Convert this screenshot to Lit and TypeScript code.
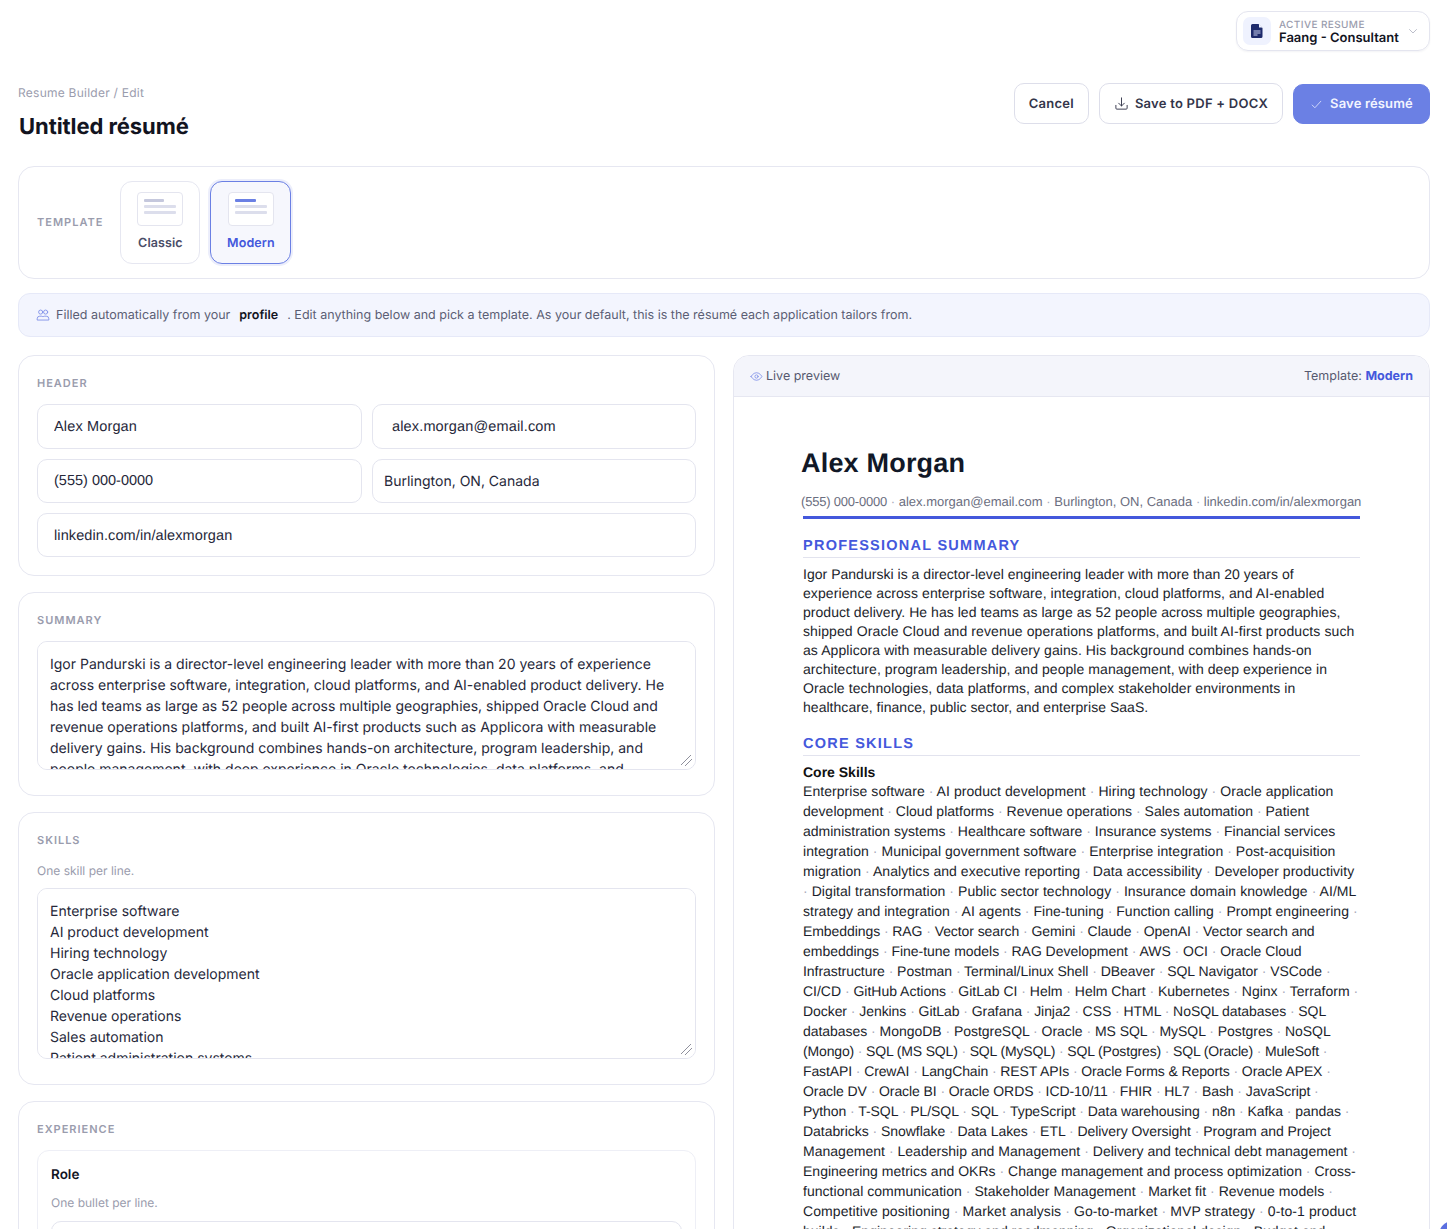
import { LitElement, html, css, svg } from "lit";
import { customElement } from "lit/decorators.js";

const SUMMARY = "Igor Pandurski is a director-level engineering leader with more than 20 years of experience across enterprise software, integration, cloud platforms, and AI-enabled product delivery. He has led teams as large as 52 people across multiple geographies, shipped Oracle Cloud and revenue operations platforms, and built AI-first products such as Applicora with measurable delivery gains. His background combines hands-on architecture, program leadership, and people management, with deep experience in Oracle technologies, data platforms, and complex stakeholder environments in healthcare, finance, public sector, and enterprise SaaS.";

const SKILLS = ["Enterprise software","AI product development","Hiring technology","Oracle application development","Cloud platforms","Revenue operations","Sales automation","Patient administration systems","Healthcare software","Insurance systems","Financial services integration"];

type Line = [string, number];

const SUMMARY_LINES: Line[] = [
  ["Igor Pandurski is a director-level engineering leader with more than 20 years of", 2],
  ["experience across enterprise software, integration, cloud platforms, and AI-enabled", 7],
  ["product delivery. He has led teams as large as 52 people across multiple geographies,", 3],
  ["shipped Oracle Cloud and revenue operations platforms, and built AI-first products such", 9],
  ["as Applicora with measurable delivery gains. His background combines hands-on", 6],
  ["architecture, program leadership, and people management, with deep experience in", 5],
  ["Oracle technologies, data platforms, and complex stakeholder environments in", 6],
  ["healthcare, finance, public sector, and enterprise SaaS.", 2],
];

const SKILL_LINES: Line[] = [
  ["Enterprise software · AI product development · Hiring technology · Oracle application", 5],
  ["development · Cloud platforms · Revenue operations · Sales automation · Patient", 1],
  ["administration systems · Healthcare software · Insurance systems · Financial services", 0],
  ["integration · Municipal government software · Enterprise integration · Post-acquisition", 4],
  ["migration · Analytics and executive reporting · Data accessibility · Developer productivity", 5],
  ["· Digital transformation · Public sector technology · Insurance domain knowledge · AI/ML", 5.5],
  ["strategy and integration · AI agents · Fine-tuning · Function calling · Prompt engineering ·", 2],
  ["Embeddings · RAG · Vector search · Gemini · Claude · OpenAI · Vector search and", -6],
  ["embeddings · Fine-tune models · RAG Development · AWS · OCI · Oracle Cloud", -2],
  ["Infrastructure · Postman · Terminal/Linux Shell · DBeaver · SQL Navigator · VSCode ·", -4],
  ["CI/CD · GitHub Actions · GitLab CI · Helm · Helm Chart · Kubernetes · Nginx · Terraform ·", -1],
  ["Docker · Jenkins · GitLab · Grafana · Jinja2 · CSS · HTML · NoSQL databases · SQL", -5],
  ["databases · MongoDB · PostgreSQL · Oracle · MS SQL · MySQL · Postgres · NoSQL", -3],
  ["(Mongo) · SQL (MS SQL) · SQL (MySQL) · SQL (Postgres) · SQL (Oracle) · MuleSoft ·", -13],
  ["FastAPI · CrewAI · LangChain · REST APIs · Oracle Forms & Reports · Oracle APEX ·", -9],
  ["Oracle DV · Oracle BI · Oracle ORDS · ICD-10/11 · FHIR · HL7 · Bash · JavaScript ·", -7],
  ["Python · T-SQL · PL/SQL · SQL · TypeScript · Data warehousing · n8n · Kafka · pandas ·", -5],
  ["Databricks · Snowflake · Data Lakes · ETL · Delivery Oversight · Program and Project", -4],
  ["Management · Leadership and Management · Delivery and technical debt management ·", 2],
  ["Engineering metrics and OKRs · Change management and process optimization · Cross-", 1],
  ["functional communication · Stakeholder Management · Market fit · Revenue models ·", 3],
  ["Competitive positioning · Market analysis · Go-to-market · MVP strategy · 0-to-1 product", 8],
  ["builds · Engineering strategy and roadmapping · Organizational design · Budget and", 0],
];

const fit = ([t, d]: Line) => `letter-spacing:${(d / t.length).toFixed(3)}px`;

const thumb = (cls: string) => html`<span class="thumb ${cls}"><i></i><i></i><i></i></span>`;

@customElement("app-root")
export class AppRoot extends LitElement {
  static styles = css`
    :host { display: block; height: 1229px; overflow: hidden; position: relative; background: #fff; font-family: Inter, "Liberation Sans", sans-serif; color: #12141f; box-sizing: border-box; padding: 0 17px 0 18px; text-rendering: geometricPrecision; }
    * { box-sizing: border-box; }
    input, textarea, button { text-rendering: geometricPrecision; }
    .top { display: flex; justify-content: flex-end; padding-top: 11px; height: 83px; }
    .active { width: 194px; height: 40px; border: 1px solid #e4e5ef; border-radius: 12px; display: flex; align-items: center; padding: 0 10px 0 6px; box-shadow: 0 1px 2px rgba(20,20,60,.05); }
    .tile { width: 28px; height: 28px; border-radius: 7px; background: #eff2fe; display: flex; align-items: center; justify-content: center; margin-right: 8px; }
    .active-text { flex: 1; display: flex; flex-direction: column; padding-top: 2px; }
    .active-label { font-size: 10px; line-height: 12px; letter-spacing: .4px; color: #9a9cad; font-weight: 500; }
    .active-name { font-size: 13px; line-height: 14px; font-weight: 600; color: #12141f; }
    .head { display: flex; justify-content: space-between; align-items: flex-start; height: 83px; }
    .crumb { font-size: 12px; line-height: 18px; color: #9a9cad; margin-bottom: 8px; padding-top: 1px; letter-spacing: .25px; }
    h1 { margin: 0 0 0 1px; font-size: 22px; line-height: 34px; font-weight: 700; letter-spacing: -.07px; color: #12141f; }
    .actions { display: flex; gap: 10px; }
    .btn { height: 41px; border: 1px solid #dddeea; border-radius: 10px; display: flex; align-items: center; gap: 6px; padding: 0 14px; font-size: 13px; font-weight: 600; letter-spacing: .25px; color: #33354a; background: #fff; font-family: inherit; }
    .btn.primary { background: #6b80e4; border-color: #6b80e4; color: #f3f5ff; width: 137px; height: 40px; justify-content: center; margin-top: 1px; gap: 7px; letter-spacing: .15px; }
    .card { border: 1px solid #e6e7f1; border-radius: 16px; background: #fff; }
    .tpl { height: 113px; display: flex; align-items: center; padding: 0 14px 0 18px; gap: 17px; }
    .tpl-label, .sec { font-size: 11px; line-height: 16px; font-weight: 600; letter-spacing: 1px; color: #9a9cad; }
    .tpl-label { padding-bottom: 2px; }
    .tpl-opts { display: flex; gap: 10px; }
    .opt { width: 80px; height: 83px; border: 1px solid #e6e7f1; border-radius: 12px; display: flex; flex-direction: column; align-items: center; padding-top: 10px; gap: 10px; font-size: 12.5px; font-weight: 600; letter-spacing: .08px; color: #4a4d68; line-height: 16px; background: #fff; }
    .opt.on { width: 81px; background: #f6f7fd; border-color: #6b80e4; color: #4458dc; box-shadow: 0 0 0 2px #eceefb; }
    .thumb { width: 46px; height: 34px; background: #fff; border: 1px solid #e4e5ef; border-radius: 4px; display: flex; flex-direction: column; padding: 6px 6px; gap: 3px; }
    .thumb i { display: block; height: 3px; border-radius: 1px; background: #dcdeec; }
    .thumb i:first-child { width: 20px; background: #c5c8dd; }
    .thumb.m i:first-child { width: 21px; background: #6b80e4; }
    .banner { margin-top: 14px; height: 44px; border: 1px solid #e6e9f8; border-radius: 12px; background: #f3f5fe; display: flex; align-items: center; padding: 0 17px; font-size: 12.5px; color: #5b5e74; white-space: pre; }
    .banner svg { margin-right: 6px; }
    .banner b { color: #12141f; font-weight: 600; margin: 0 9px; }
    .cols { margin-top: 18px; display: grid; grid-template-columns: 697px 697px; gap: 18px; align-items: start; }
    .left { display: flex; flex-direction: column; gap: 16px; }
    .sec-card { padding: 19px 18px 18px; }
    .header-card { height: 221px; }
    .grid { margin-top: 13px; display: grid; grid-template-columns: 325px 324px; grid-template-rows: 45px 44px 44px; gap: 10px; }
    .full { grid-column: 1 / -1; }
    input { width: 100%; height: 100%; border: 1px solid #e4e5ef; border-radius: 10px; font-family: "Liberation Sans", Arial, sans-serif; font-size: 14.5px; letter-spacing: .15px; color: #26283a; padding: 0 16px; background: #fff; outline: none; display: block; }
    input.num { letter-spacing: 0; }
    input.wide { padding-left: 19px; }
    input.narrow { padding-left: 11px; font-family: Inter, sans-serif; font-size: 14px; letter-spacing: 0; }
    input.full { padding-top: 2px; letter-spacing: .1px; }
    textarea { display: block; width: 100%; border: 1px solid #e4e5ef; border-radius: 10px; font-family: inherit; font-size: 14px; line-height: 21px; color: #26283a; padding: 12px; background: #fff; outline: none; margin: 0; }
    textarea::-webkit-resizer { background: linear-gradient(135deg, transparent 42%, #8f909c 42%, #8f909c 49%, transparent 49%, transparent 65%, #8f909c 65%, #8f909c 72%, transparent 72%) 1px 1px / 11px 11px no-repeat; }
    .hint { font-size: 12px; line-height: 18px; color: #9a9cad; }
    .sum-card { height: 204px; }
    .sum-card textarea { margin-top: 13px; height: 129px; }
    .skill-card { height: 273px; }
    .skill-card .hint { margin-top: 14px; }
    .skill-card textarea { margin-top: 8px; height: 171px; }
    .exp-card { height: 300px; }
    .role { margin-top: 13px; border: 1px solid #eeeff6; border-radius: 12px; padding: 15px 13px; height: 200px; }
    .role-t { font-size: 13.5px; line-height: 18px; font-weight: 600; color: #12141f; }
    .role .hint { margin-top: 10px; }
    .role .box { margin-top: 9px; height: 80px; border: 1px solid #e4e5ef; border-radius: 10px; }
    .prev { height: 900px; overflow: hidden; }
    .prev-head { height: 41px; background: #f4f5fb; border-bottom: 1px solid #e6e7f1; border-radius: 15px 15px 0 0; display: flex; justify-content: space-between; align-items: center; padding: 0 16px; font-size: 12.5px; color: #56596f; }
    .prev-head span { display: flex; align-items: center; gap: 3px; }
    .prev-head b { color: #4458dc; font-weight: 700; }
    .doc { padding: 47px 69px 0; font-family: "Liberation Sans", Arial, sans-serif; color: #1b1e2b; font-size: 14px; line-height: 19px; }
    .doc h2 { margin: 1px 0 0 -2px; font-size: 27px; line-height: 36px; font-weight: 700; color: #111827; letter-spacing: .2px; }
    .contact { margin: 12px -4px 0 -2px; font-size: 13px; line-height: 18px; color: #6b6e80; white-space: nowrap; }
    .contact .phone { letter-spacing: -.2px; }
    .contact em, .skills em { font-style: normal; color: #a6a8b8; }
    .rule { height: 3px; background: #4458dc; margin-top: 5px; }
    .doc h3 { margin: 17px 0 0; font-size: 14.5px; line-height: 20px; padding-bottom: 1px; font-weight: 700; color: #4458dc; letter-spacing: 1.25px; border-bottom: 1px solid #e2e3ee; }
    .para { margin-top: 7px; }
    .para div, .skills div { white-space: nowrap; }
    .sub { font-weight: 700; margin-top: 7px; color: #111; }
    .skills { line-height: 20px; margin: -1px 0 0; }
    .fab { position: absolute; right: -20px; bottom: -20px; width: 28px; height: 28px; border-radius: 50%; background: #5b6fe0; }
  `;

  private ic(paths: unknown, size: number, color: string, sw = 1.5) {
    return html`<svg width=${size} height=${size} viewBox="0 0 24 24" fill="none" stroke=${color} stroke-width=${sw} stroke-linecap="round" stroke-linejoin="round">${paths}</svg>`;
  }

  private skillLine(l: Line) {
    const parts = l[0].split("·");
    return html`<div style=${fit(l)}>${parts.map((p, i) => html`${i ? html`<em>·</em>` : ""}${p}`)}</div>`;
  }

  render() {
    return html`
      <div class="top">
        <div class="active">
          <span class="tile"><svg width="14" height="16" viewBox="0 0 14 16"><path d="M2.5 1h6L12.5 5v8.5a1.5 1.5 0 0 1-1.5 1.5H2.5A1.5 1.5 0 0 1 1 13.5v-11A1.5 1.500 0 0 1 2.500 1z" fill="#1e2a6b"/><path d="M9 1l3.5 3.600H9z" fill="#eff2fe"/><path d="M3.500 8h7M3.500 10h7M3.500 12h4" stroke="#c9d0f0" stroke-width="1"/></svg></span>
          <div class="active-text"><span class="active-label">ACTIVE RESUME</span><span class="active-name">Faang - Consultant</span></div>
          ${this.ic(svg`<path d="M5 9l7 7 7-7"/>`, 12, "#a6a8b8")}
        </div>
      </div>
      <div class="head">
        <div>
          <div class="crumb">Resume Builder / Edit</div>
          <h1>Untitled résumé</h1>
        </div>
        <div class="actions">
          <button class="btn">Cancel</button>
          <button class="btn">${this.ic(svg`<path d="M3 15v4.500A1.500 1.500 0 0 0 4.500 21h15a1.500 1.500 0 0 0 1.500-1.500V15M12 3v13M7.500 11.500L12 16l4.500-4.500"/>`, 15, "#33354a")}Save to PDF + DOCX</button>
          <button class="btn primary">${this.ic(svg`<path d="M4 13l5 5L20 6"/>`, 13, "#e4e8ff")}Save résumé</button>
        </div>
      </div>
      <div class="card tpl">
        <span class="tpl-label">TEMPLATE</span>
        <div class="tpl-opts">
          <div class="opt">${thumb("c")}Classic</div>
          <div class="opt on">${thumb("m")}Modern</div>
        </div>
      </div>
      <div class="banner">${this.ic(svg`<circle cx="8" cy="7" r="3.500"/><circle cx="16.500" cy="7" r="3.500"/><path d="M2 20v-1.500A4.500 4.500 0 0 1 6.500 14H9a4.500 4.500 0 0 1 3 1.200A4.500 4.500 0 0 1 15 14h2.500a4.500 4.500 0 0 1 4.500 4.500V20z"/>`, 14, "#7d8ee8")}<span>Filled automatically from your</span><b>profile</b><span>. Edit anything below and pick a template. As your default, this is the résumé each application tailors from.</span></div>
      <div class="cols">
        <div class="left">
          <div class="card sec-card header-card">
            <div class="sec">HEADER</div>
            <div class="grid">
              <input .value=${"Alex Morgan"} />
              <input class="wide" .value=${"alex.morgan@email.com"} />
              <input class="num" .value=${"(555) 000-0000"} />
              <input class="narrow" .value=${"Burlington, ON, Canada"} />
              <input class="full" .value=${"linkedin.com/in/alexmorgan"} />
            </div>
          </div>
          <div class="card sec-card sum-card">
            <div class="sec">SUMMARY</div>
            <textarea .value=${SUMMARY}></textarea>
          </div>
          <div class="card sec-card skill-card">
            <div class="sec">SKILLS</div>
            <div class="hint">One skill per line.</div>
            <textarea .value=${SKILLS.join("\n")}></textarea>
          </div>
          <div class="card sec-card exp-card">
            <div class="sec">EXPERIENCE</div>
            <div class="role">
              <div class="role-t">Role</div>
              <div class="hint">One bullet per line.</div>
              <div class="box"></div>
            </div>
          </div>
        </div>
        <div class="card prev">
          <div class="prev-head">
            <span>${this.ic(svg`<path d="M2 12s3.600-7 10-7 10 7 10 7-3.600 7-10 7-10-7-10-7z"/><circle cx="12" cy="12" r="3"/>`, 13, "#7d8ee8")}Live preview</span>
            <div>Template: <b>Modern</b></div>
          </div>
          <div class="doc">
            <h2>Alex Morgan</h2>
            <div class="contact"><span class="phone">(555) 000-0000</span> <em>·</em> alex.morgan@email.com <em>·</em> Burlington, ON, Canada <em>·</em> linkedin.com/in/alexmorgan</div>
            <div class="rule"></div>
            <h3>PROFESSIONAL SUMMARY</h3>
            <div class="para">${SUMMARY_LINES.map((l) => html`<div style=${fit(l)}>${l[0]}</div>`)}</div>
            <h3>CORE SKILLS</h3>
            <div class="sub">Core Skills</div>
            <div class="skills">${SKILL_LINES.map((l) => this.skillLine(l))}</div>
          </div>
        </div>
      </div>
      <div class="fab"></div>
    `;
  }
}
